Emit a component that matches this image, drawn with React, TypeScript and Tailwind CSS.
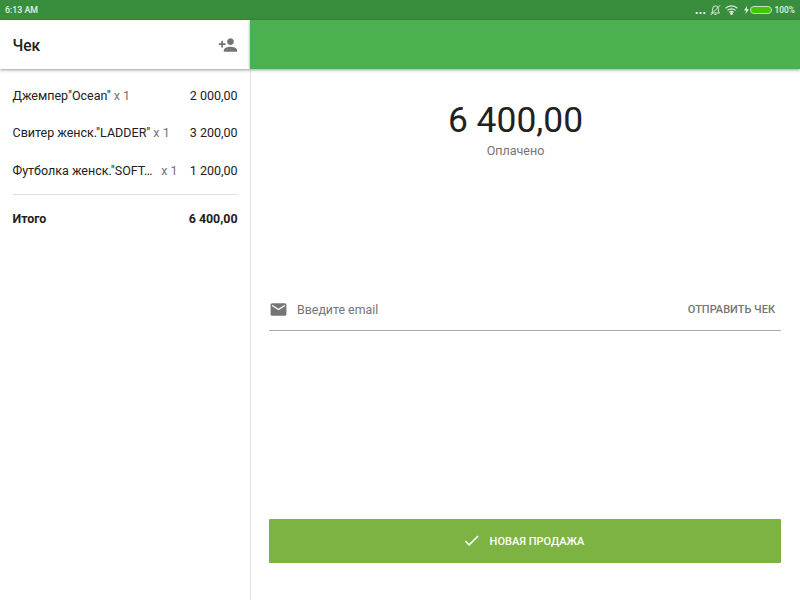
import React from "react";

const items = [
  { name: 'Джемпер"Ocean"', qty: "x 1", price: "2 000,00", gap: "ml-[3px]" },
  { name: 'Свитер женск."LADDER"', qty: "x 1", price: "3 200,00", gap: "ml-[3px]" },
  { name: 'Футболка женск."SOFT…', qty: "x 1", price: "1 200,00", gap: "ml-[9px]" },
];

function StatusBar() {
  return (
    <div className="flex h-[19.5px] shrink-0 items-center justify-between bg-[#388e3c] pl-[5px] pr-[5px] text-[8.8px] font-medium text-[#e4f1e5]">
      <span className="pt-[2px]">6:13 AM</span>
      <div className="flex items-center">
        <svg width="11" height="12" viewBox="0 0 11 12" fill="#e4f1e5" className="mr-[4px]">
          <rect x="0.7" y="8" width="2" height="2" /><rect x="4.5" y="8" width="2" height="2" /><rect x="8.3" y="8" width="2" height="2" />
        </svg>
        <svg width="11" height="12" viewBox="0 0 11 12" fill="none" stroke="#e4f1e5" strokeWidth="0.9" className="mr-[4px]">
          <path d="M1.5 9h8L8.4 7.2V4.8a2.9 2.9 0 0 0-5.8 0v2.4zM4.5 10.5h2M.7 11 10.2 1.2" />
        </svg>
        <svg width="13" height="10" viewBox="0 0 13 10" fill="none" stroke="#e4f1e5" strokeWidth="1.2" className="mr-[6px]">
          <path d="M.6 3.3a8.6 8.6 0 0 1 11.8 0M2.5 5.4a5.8 5.8 0 0 1 8 0M4.4 7.4a3 3 0 0 1 4.2 0" /><circle cx="6.5" cy="8.6" r=".8" fill="#e4f1e5" />
        </svg>
        <svg width="5" height="8" viewBox="0 0 5 8" fill="#e4f1e5" className="mr-[1px]"><path d="M3 0 0 4.4h2L1.5 8 5 3.2H2.8z" /></svg>
        <div className="mr-[3px] h-[8px] w-[22px] rounded-[4px] border border-[#c5dfc6] bg-[#43c500]" />
        <span className="pt-[2px] text-[8.4px]">100%</span>
      </div>
    </div>
  );
}

export default function App() {
  return (
    <div className="flex h-[600px] w-[800px] flex-col overflow-hidden bg-white font-['Roboto','Noto_Sans',sans-serif] text-[#212121]">
      <StatusBar />
      <div className="flex min-h-0 flex-1">
        <aside className="flex w-[251px] shrink-0 flex-col">
          <header className="mr-px flex h-[49.5px] shrink-0 items-center justify-between pl-[12.5px] pr-[12px] shadow-[0_1px_3px_rgba(0,0,0,0.4)]">
            <h1 className="pt-[4px] text-[15.6px] font-medium">Чек</h1>
            <svg width="20" height="20" viewBox="0 0 24 24" fill="#757575" className="mt-px">
              <path d="M15 12c2.21 0 4-1.79 4-4s-1.79-4-4-4-4 1.79-4 4 1.79 4 4 4zm-9-2V7H4v3H1v2h3v3h2v-3h3v-2H6zm9 4c-2.67 0-8 1.34-8 4v2h16v-2c0-2.66-5.33-4-8-4z" />
            </svg>
          </header>
          <div className="flex-1 border-r border-[#e0e0e0] pl-[12.5px] pr-[12.5px] pt-[8.5px] text-[12.5px]">
            {items.map((i) => (
              <div key={i.name} className="flex h-[37.5px] items-center whitespace-nowrap">
                <span>{i.name}</span>
                <span className={i.gap + " text-[#757575]"}>{i.qty}</span>
                <span className="ml-auto">{i.price}</span>
              </div>
            ))}
            <div className="mt-[3.5px] h-px bg-[#e0e0e0]" />
            <div className="mt-[6px] flex h-[38px] items-center justify-between text-[12.4px] font-bold">
              <span>Итого</span>
              <span>6 400,00</span>
            </div>
          </div>
        </aside>
        <main className="flex min-w-0 flex-1 flex-col">
          <div className="-ml-px h-[49.5px] shrink-0 bg-[#4caf50] shadow-[0_1px_3px_rgba(0,0,0,0.4)]" />
          <div className="flex flex-1 flex-col pl-[18px] pr-[19px]">
            <div className="mt-[30px] h-[42px] pr-[19px] text-center text-[35.4px] leading-[42px]">6 400,00</div>
            <div className="mt-[2px] pr-[19px] text-center text-[12.5px] leading-[16px] text-[#757575]">Оплачено</div>
            <div className="mt-[130px] flex h-[42px] items-center border-b border-[#a8a8a8] text-[12.4px] text-[#757575]">
              <svg width="19" height="19" viewBox="0 0 24 24" fill="#757575" className="-ml-[0.5px]">
                <path d="M20 4H4c-1.1 0-2 .9-2 2v12c0 1.1.9 2 2 2h16c1.1 0 2-.9 2-2V6c0-1.1-.9-2-2-2zm0 4-8 5-8-5V6l8 5 8-5z" />
              </svg>
              <span className="ml-[9.5px] pt-px">Введите email</span>
              <span className="ml-auto mr-[6px] pt-[2px] text-[11px] font-medium">ОТПРАВИТЬ ЧЕК</span>
            </div>
            <button className="mt-[188px] flex h-[43.5px] w-full items-center justify-center rounded-[1px] bg-[#7cb342] pr-[4px] text-[11px] font-medium text-white">
              <svg width="19" height="19" viewBox="0 0 24 24" fill="white" className="mr-[9px]">
                <path d="M9 16.17 4.83 12l-1.42 1.41L9 19 21 7l-1.41-1.41z" />
              </svg>
              <span className="pt-[2px]">НОВАЯ ПРОДАЖА</span>
            </button>
          </div>
        </main>
      </div>
    </div>
  );
}
